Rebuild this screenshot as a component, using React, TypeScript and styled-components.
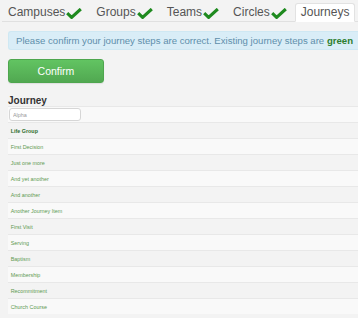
import React from "react";
import styled, { createGlobalStyle } from "styled-components";

const Global = createGlobalStyle`
  html, body { margin: 0; padding: 0; }
  body {
    background: #f3f3f3;
    overflow: hidden;
    font-family: "Liberation Sans", Arial, sans-serif;
  }
`;

const Page = styled.div`
  padding-left: 8px;
  overflow: hidden;
`;

const Tabs = styled.ul`
  list-style: none;
  margin: 0 0 0 -6px;
  padding: 3px 0 0 0;
  display: flex;
  border-bottom: 1px solid #e0e0e0;
`;

const Tab = styled.li<{ $active?: boolean }>`
  display: flex;
  align-items: center;
  flex-shrink: 0;
  height: 19px;
  box-sizing: border-box;
  padding: 0 5px;
  margin: 0 2px -1px 0;
  border: 1px solid ${(p) => (p.$active ? "#e2e2e2" : "transparent")};
  border-bottom-color: transparent;
  border-radius: 3px 3px 0 0;
  background: ${(p) => (p.$active ? "#ffffff" : "transparent")};
  color: #555;
  font-size: 12px;
  line-height: 17px;
`;

const Check = styled.svg`
  width: 16px;
  height: 11px;
  margin-left: 1px;
  margin-top: 1px;
`;

const Alert = styled.div`
  margin-top: 9px;
  height: 19px;
  box-sizing: border-box;
  padding: 0 7px;
  background: #d9edf7;
  border: 1px solid #cfe8f3;
  border-right: none;
  border-radius: 3px 0 0 3px;
  color: #5f8fab;
  font-size: 9.6px;
  line-height: 17px;
  white-space: nowrap;
  overflow: hidden;
`;

const Green = styled.strong`
  color: #2e7d2e;
`;

const ConfirmButton = styled.button`
  display: block;
  margin-top: 9px;
  width: 96px;
  height: 24px;
  border: 1px solid #4ea64e;
  border-radius: 3px;
  background: linear-gradient(#62c462, #51a851);
  color: #fff;
  font-family: "Liberation Sans", Arial, sans-serif;
  font-size: 10.5px;
  padding: 0;
  box-shadow: 0 1px 1px rgba(0, 0, 0, 0.08);
`;

const Heading = styled.h3`
  margin: 12px 0 0 0;
  font-size: 10px;
  line-height: 11px;
  font-weight: bold;
  color: #333;
`;

const Table = styled.div`
  display: flex;
  flex-direction: column;
`;

const Row = styled.div<{ $light: boolean; $bold?: boolean }>`
  height: 16px;
  box-sizing: border-box;
  border-top: 1px solid #e8e8e8;
  background: ${(p) => (p.$light ? "#f9f9f9" : "transparent")};
  display: flex;
  align-items: center;
  padding-left: 2.7px;
  font-size: 5.4px;
  color: ${(p) => (p.$bold ? "#2f6e2f" : "#5e9a52")};
  font-weight: ${(p) => (p.$bold ? "bold" : "normal")};
`;

const InputRow = styled(Row)`
  padding-left: 1px;
`;

const Input = styled.input`
  width: 72px;
  height: 13px;
  box-sizing: border-box;
  border: 1px solid #d6d6d6;
  border-radius: 3px;
  background: #fff;
  padding: 0 3px;
  font-family: "Liberation Sans", Arial, sans-serif;
  font-size: 5.4px;
  color: #777;
  &::placeholder { color: #999; }
`;

const tabs = ["Campuses", "Groups", "Teams", "Circles"];
const steps = [
  "First Decision",
  "Just one more",
  "And yet another",
  "And another",
  "Another Journey Item",
  "First Visit",
  "Serving",
  "Baptism",
  "Membership",
  "Recommitment",
  "Church Course",
];

const CheckIcon = () => (
  <Check viewBox="0 0 16 11">
    <path d="M1.2 5.2 L5.6 9.4 L14.8 1" fill="none" stroke="#1f8a1f" strokeWidth="3.1" />
  </Check>
);

export default function App() {
  return (
    <>
      <Global />
      <Page>
        <Tabs>
          {tabs.map((t) => (
            <Tab key={t}>
              {t}
              <CheckIcon />
            </Tab>
          ))}
          <Tab $active>Journeys</Tab>
        </Tabs>
        <Alert>
          Please confirm your journey steps are correct. Existing journey steps are <Green>green</Green>
        </Alert>
        <ConfirmButton>Confirm</ConfirmButton>
        <Heading>Journey</Heading>
        <Table>
          <InputRow $light>
            <Input placeholder="Alpha" />
          </InputRow>
          <Row $light={false} $bold>Life Group</Row>
          {steps.map((s, i) => (
            <Row key={s} $light={i % 2 === 0}>
              {s}
            </Row>
          ))}
        </Table>
      </Page>
    </>
  );
}
